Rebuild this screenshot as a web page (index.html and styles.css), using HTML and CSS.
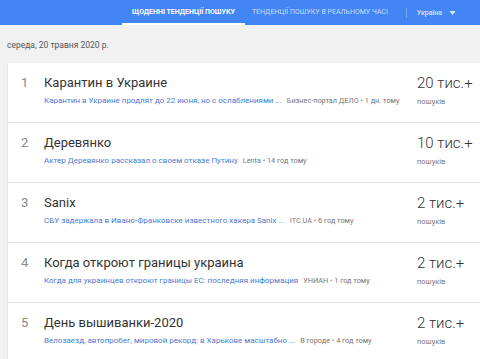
FILE: index.html
```html
<!DOCTYPE html>
<html lang="uk">
<head>
    <meta charset="UTF-8">
    <meta name="viewport" content="width=device-width, initial-scale=1.0">
    <title>Google Trends - Щоденні тенденції пошуку</title>
    <link rel="stylesheet" href="styles.css">
</head>
<body>

    <!-- Top bar -->
    <nav class="topbar">
        <a class="tab active" href="#">Щоденні тенденції пошуку</a>
        <a class="tab" href="#">Тенденції пошуку в реальному часі</a>
        <span class="divider"></span>
        <div class="country">
            Україна
            <svg class="caret" width="7" height="4" viewBox="0 0 8 5"><path d="M0 0h8L4 5z" fill="currentColor"/></svg>
        </div>
    </nav>

    <main class="content">
        <div class="date">середа, 20 травня 2020 р.</div>

        <!-- Trends list -->
        <section class="card">
            <div class="trend">
                <div class="index">1</div>
                <div class="info">
                    <div class="title">Карантин в Украине</div>
                    <div class="summary"><a href="#">Карантин в Украине продлят до 22 июня, но с ослаблениями ...</a><span class="source">Бизнес-портал ДЕЛО • 1 дн. тому</span></div>
                </div>
                <div class="count">
                    <div class="num">20 тис.+</div>
                    <div class="label">пошуків</div>
                </div>
            </div>
            <div class="trend">
                <div class="index">2</div>
                <div class="info">
                    <div class="title">Деревянко</div>
                    <div class="summary"><a href="#">Актер Деревянко рассказал о своем отказе Путину</a><span class="source">Lenta • 14 год тому</span></div>
                </div>
                <div class="count">
                    <div class="num">10 тис.+</div>
                    <div class="label">пошуків</div>
                </div>
            </div>
            <div class="trend">
                <div class="index">3</div>
                <div class="info">
                    <div class="title">Sanix</div>
                    <div class="summary"><a href="#">СБУ задержала в Ивано-Франковске известного хакера Sanix ...</a><span class="source">ITC.UA • 6 год тому</span></div>
                </div>
                <div class="count">
                    <div class="num">2 тис.+</div>
                    <div class="label">пошуків</div>
                </div>
            </div>
            <div class="trend">
                <div class="index">4</div>
                <div class="info">
                    <div class="title">Когда откроют границы украина</div>
                    <div class="summary"><a href="#">Когда для украинцев откроют границы ЕС: последняя информация</a><span class="source">УНИАН • 1 год тому</span></div>
                </div>
                <div class="count">
                    <div class="num">2 тис.+</div>
                    <div class="label">пошуків</div>
                </div>
            </div>
            <div class="trend">
                <div class="index">5</div>
                <div class="info">
                    <div class="title">День вышиванки-2020</div>
                    <div class="summary"><a href="#">Велозаезд, автопробег, мировой рекорд: в Харькове масштабно ...</a><span class="source">В городе • 4 год тому</span></div>
                </div>
                <div class="count">
                    <div class="num">2 тис.+</div>
                    <div class="label">пошуків</div>
                </div>
            </div>
        </section>
    </main>

</body>
</html>
```

FILE: styles.css
```css
/* Reset & Global Styles */
* {
    margin: 0;
    padding: 0;
    box-sizing: border-box;
    font-family: Roboto, "Noto Sans", sans-serif;
}

body {
    background: #f1f1f1;
    color: #333;
    overflow: hidden;
}

a {
    text-decoration: none;
}

/* Top bar */
.topbar {
    display: flex;
    align-items: stretch;
    height: 25px;
    background: #4285f4;
    padding-left: 122px;
}

.tab {
    display: flex;
    align-items: center;
    padding: 1px 10px 0;
    font-size: 7px;
    font-weight: 400;
    text-transform: uppercase;
    color: rgba(255, 255, 255, 0.72);
    border-bottom: 2px solid transparent;
    white-space: nowrap;
}

.tab.active {
    color: #fff;
    border-bottom-color: #fff;
    font-weight: 700;
}

.tab + .tab {
    padding-left: 7px;
}

.divider {
    width: 1px;
    height: 10px;
    align-self: center;
    margin: 0 10px 0 8px;
    background: rgba(255, 255, 255, 0.3);
}

.country {
    display: flex;
    align-items: center;
    gap: 7px;
    font-size: 7px;
    font-weight: 500;
    color: rgba(255, 255, 255, 0.8);
}

/* Content */
.content {
    padding: 15px 0 0 8px;
}

.date {
    font-size: 8.5px;
    color: #555;
    margin: 0 0 13px -1px;
}

.card {
    background: #fff;
    box-shadow: 0 1px 2px rgba(0, 0, 0, 0.12);
}

.trend {
    display: flex;
    height: 60px;
    padding-top: 12px;
    border-bottom: 1px solid #e3e3e3;
}

.trend:last-child {
    border-bottom: none;
}

.index {
    width: 36px;
    padding-left: 13px;
    font-size: 13px;
    color: #888;
    line-height: 16px;
}

.info {
    flex: 1;
    min-width: 0;
}

.title {
    font-size: 13px;
    line-height: 16px;
    color: #333;
}

.summary {
    margin-top: 4px;
    font-size: 8px;
    line-height: 12px;
    white-space: nowrap;
}

.summary a {
    color: #4a7bd0;
}

.source {
    color: #777;
    margin-left: 5px;
    font-size: 7.3px;
}

.count {
    width: 63px;
}

.num {
    font-size: 15px;
    font-weight: 300;
    line-height: 18px;
    color: #333;
    margin-top: -1px;
}

.label {
    margin-top: 5px;
    font-size: 7.5px;
    color: #777;
}
```
